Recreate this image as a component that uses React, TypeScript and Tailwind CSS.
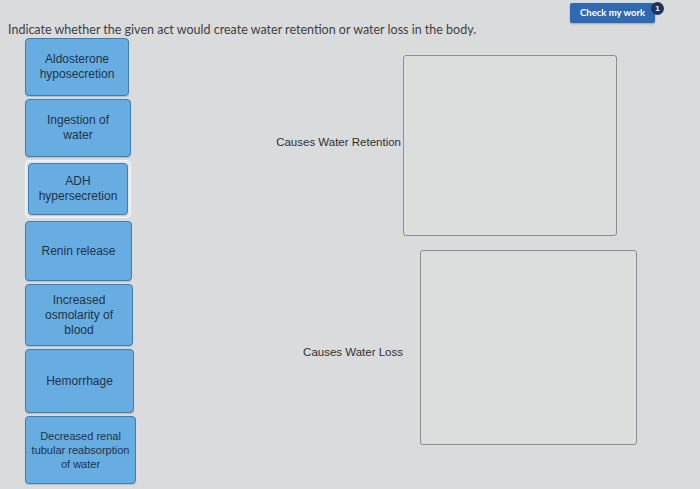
import React from 'react'

const CARDS = [
  { label: ['Aldosterone', 'hyposecretion'], size: 'h-[58px] w-[104px]' },
  { label: ['Ingestion of', 'water'], size: 'h-[58px] w-[106px]' },
  { label: ['ADH', 'hypersecretion'], size: 'h-[58px] w-[106px]', selected: true },
  { label: ['Renin release'], size: 'h-[60px] w-[107px]' },
  { label: ['Increased', 'osmolarity of', 'blood'], size: 'h-[62px] w-[108px]' },
  { label: ['Hemorrhage'], size: 'h-[64px] w-[109px]' },
  { label: ['Decreased renal', 'tubular reabsorption', 'of water'], size: 'h-[68px] w-[111px]', small: true },
]

function Card({ label, size, selected, small }: { label: string[]; size: string; selected?: boolean; small?: boolean }) {
  const inner = (
    <div
      className={`h-full w-full rounded-[4px] border border-[#3f7db5] bg-[#68ade1] flex flex-col items-center justify-center text-center text-[#1f324a] shadow-[0_1px_1px_rgba(0,0,0,0.15)] ${
        small ? 'text-[11px] leading-[14px]' : 'text-[12px] leading-[15px]'
      }`}
    >
      {label.map((l) => (
        <span key={l}>{l}</span>
      ))}
    </div>
  )
  if (selected) {
    return (
      <div className={`${size} rounded-[4px] border border-[#f4f4f4] bg-[#e6e6e6] p-[2px]`}>
        {inner}
      </div>
    )
  }
  return <div className={size}>{inner}</div>
}

export default function App() {
  return (
    <div className="w-[700px] h-[489px] overflow-hidden bg-[#dadbdc] font-['Liberation_Sans',Arial,sans-serif]">
      {/* header */}
      <div className="flex items-start justify-between pl-[8px] pr-[45px] pt-[3px] h-[38px]">
        <p className="mt-[19px] text-[12.5px] leading-[15px] text-[#3e3f42] font-['Lato',sans-serif]">
          Indicate whether the given act would create water retention or water loss in the body.
        </p>
        <div className="relative flex">
          <button className="block h-[20px] w-[85px] rounded-[2px] bg-[#2f69b1] text-white text-[9.5px] font-bold font-['Lato',sans-serif] shadow-[0_1px_2px_rgba(0,0,0,0.25)]">
            Check my work
          </button>
          <span className="absolute -top-[1px] -right-[9px] flex h-[13px] w-[13px] items-center justify-center rounded-full bg-[#1d3560] text-[8px] font-bold text-white">
            1
          </span>
        </div>
      </div>

      <div className="flex">
        {/* draggable items */}
        <div className="flex flex-col gap-[3px] pl-[25px] w-[137px]">
          {CARDS.map((c) => (
            <Card key={c.label.join(' ')} {...c} />
          ))}
        </div>

        {/* drop zones */}
        <div className="flex flex-col">
          <div className="flex items-center mt-[17px]">
            <span className="w-[264px] mb-[6px] text-right text-[11.5px] text-[#2f3033]">Causes Water Retention</span>
            <div className="ml-[2px] h-[181px] w-[214px] rounded-[3px] border border-[#8c8d8f] bg-[#dcdddd]" />
          </div>
          <div className="flex items-center mt-[14px]">
            <span className="w-[266px] mt-[10px] text-right text-[11.5px] text-[#2f3033]">Causes Water Loss</span>
            <div className="ml-[17px] h-[195px] w-[217px] rounded-[3px] border border-[#8c8d8f] bg-[#dcdddd]" />
          </div>
        </div>
      </div>
    </div>
  )
}
